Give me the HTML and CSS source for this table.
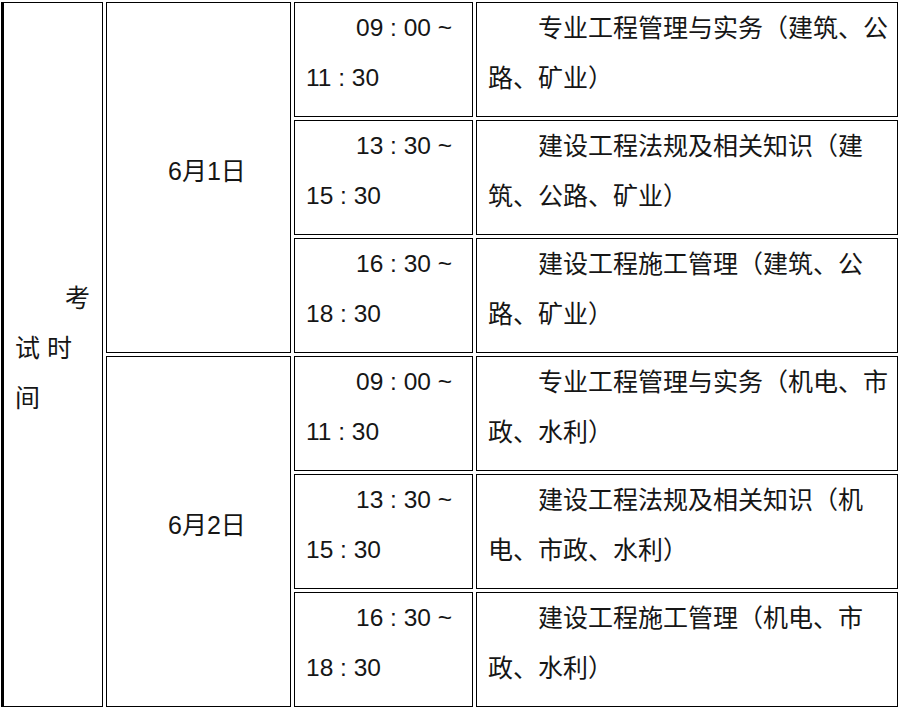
FILE: index.html
```html
<!DOCTYPE html>
<html lang="zh-CN">
<head>
<meta charset="utf-8">
<title>考试时间</title>
<link rel="stylesheet" href="styles.css">
</head>
<body>
<div class="sched">
  <div class="cell head"><p class="txt">考<br>试 时<br>间</p></div>
  <div class="cell date d1"><p class="txt">6月1日</p></div>
  <div class="cell date d2"><p class="txt">6月2日</p></div>

  <div class="cell time r1"><p class="txt">09 : 00 ~<br>11 : 30</p></div>
  <div class="cell subj r1"><p class="txt">专业工程管理与实务（建筑、公路、矿业）</p></div>

  <div class="cell time r2"><p class="txt">13 : 30 ~<br>15 : 30</p></div>
  <div class="cell subj r2"><p class="txt">建设工程法规及相关知识（建筑、公路、矿业）</p></div>

  <div class="cell time r3"><p class="txt">16 : 30 ~<br>18 : 30</p></div>
  <div class="cell subj r3"><p class="txt">建设工程施工管理（建筑、公路、矿业）</p></div>

  <div class="cell time r4"><p class="txt">09 : 00 ~<br>11 : 30</p></div>
  <div class="cell subj r4"><p class="txt">专业工程管理与实务（机电、市政、水利）</p></div>

  <div class="cell time r5"><p class="txt">13 : 30 ~<br>15 : 30</p></div>
  <div class="cell subj r5"><p class="txt">建设工程法规及相关知识（机电、市政、水利）</p></div>

  <div class="cell time r6"><p class="txt">16 : 30 ~<br>18 : 30</p></div>
  <div class="cell subj r6"><p class="txt">建设工程施工管理（机电、市政、水利）</p></div>
</div>
</body>
</html>
```
FILE: styles.css
```css
html, body {
  margin: 0;
  padding: 0;
  background: #ffffff;
}

body {
  font-family: "Liberation Sans", "Noto Sans CJK SC", sans-serif;
  font-size: 25px;
  line-height: 50px;
  color: #161616;
}

.sched {
  display: grid;
  grid-template-columns: 102px 185px 179px 422px;
  grid-template-rows: repeat(6, 115px);
  gap: 3px;
  padding: 2px 0 0 1px;
  width: 898px;
  box-sizing: border-box;
}

.cell {
  border: 1px solid #000;
  box-sizing: border-box;
  min-width: 0;
}

.txt {
  margin: 0;
  text-indent: 2em;
}

.head {
  grid-column: 1;
  grid-row: 1 / 7;
  border-left: 3px solid #000;
  display: flex;
  align-items: center;
  padding: 0 0 14px 11px;
}

.date {
  grid-column: 2;
  display: flex;
  align-items: center;
  padding: 0 0 14px 11px;
}

.d1 { grid-row: 1 / 4; }
.d2 { grid-row: 4 / 7; }

.time {
  grid-column: 3;
  padding: 0 0 0 11px;
  font-size: 24.5px;
}

.time .txt {
  text-indent: 50px;
}

.subj {
  grid-column: 4;
  padding: 0 0 0 11px;
}

.r1 { grid-row: 1; }
.r2 { grid-row: 2; }
.r3 { grid-row: 3; }
.r4 { grid-row: 4; }
.r5 { grid-row: 5; }
.r6 { grid-row: 6; }
```
